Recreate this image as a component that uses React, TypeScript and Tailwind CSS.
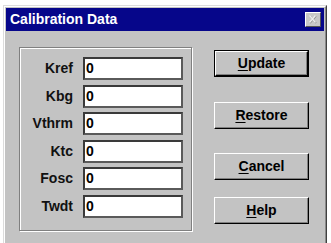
import type { ReactNode } from 'react'

const fields = ['Kref', 'Kbg', 'Vthrm', 'Ktc', 'Fosc', 'Twdt']

function Button({ label, hot, isDefault, className }: { label: string; hot: string; isDefault?: boolean; className?: string }) {
  const rest = label.slice(1)
  const face = (
    <div className="flex h-full w-full items-center justify-center border border-t-white border-l-white border-r-black border-b-black bg-[#c3c3c3] shadow-[inset_-1px_-1px_0_#808080] text-[14px] font-bold text-black">
      <span>
        <span className="underline underline-offset-2">{hot}</span>
        {rest}
      </span>
    </div>
  )
  return (
    <div className={`h-[27px] w-[95px] ${isDefault ? 'border border-black' : ''} ${className ?? ''}`}>{face}</div>
  )
}

function Field({ name }: { name: string }): ReactNode {
  return (
    <div className="flex h-[23px] items-center">
      <div className="w-[53px] text-right text-[14px] font-bold text-[#111]">{name}</div>
      <div className="ml-[10px] flex h-[23px] w-[100px] items-start border-2 border-t-[#3a3a3a] border-l-[#3a3a3a] border-r-[#5a5a5a] border-b-[#5a5a5a] bg-white pl-[1px] pt-[1px] text-[14px] font-bold leading-[16px] text-black">
        0
      </div>
    </div>
  )
}

export default function App() {
  return (
    <div className="h-[243px] w-[331px] overflow-hidden bg-white pl-[3px] pt-[5px]" style={{ fontFamily: '"Liberation Sans", Arial, sans-serif' }}>
      <div className="h-[250px] w-[324px] border-t border-l border-r border-t-[#dcdcdc] border-l-[#dcdcdc] border-r-[#404040] bg-[#c3c3c3]">
        <div className="h-full border-t border-l border-r border-t-white border-l-white border-r-[#8a8a8a] p-px">
          <div className="flex h-[23px] items-center justify-between bg-[#06068a] pl-[4px] pr-[3px]">
            <span className="text-[14px] font-bold text-white">Calibration Data</span>
            <div className="flex h-[15px] w-[16px] items-center justify-center border border-t-white border-l-white border-r-[#555] border-b-[#555] bg-[#c8c8c8]">
              <svg width="10" height="9" viewBox="0 0 10 9">
                <path d="M2 1 L8 8 M8 1 L2 8" stroke="#8c8c8c" strokeWidth="1.6" />
                <path d="M1.5 0.5 L7.5 7.5 M7.5 0.5 L1.5 7.5" stroke="#eeeeee" strokeWidth="1.4" />
              </svg>
            </div>
          </div>

          <div className="flex pl-[13px] pt-[16px]">
            <div className="h-[184px] w-[173px] border border-[#808080] pt-[9px] shadow-[inset_1px_1px_0_#fff,1px_1px_0_#fff]">
              <div className="flex flex-col gap-[4.6px]">
                {fields.map((f) => (
                  <Field key={f} name={f} />
                ))}
              </div>
            </div>

            <div className="ml-[22px] flex flex-col pt-[3px]">
              <Button label="Update" hot="U" isDefault />
              <Button label="Restore" hot="R" className="mt-[25px]" />
              <Button label="Cancel" hot="C" className="mt-[24px]" />
              <Button label="Help" hot="H" className="mt-[17px]" />
            </div>
          </div>
        </div>
      </div>
    </div>
  )
}
